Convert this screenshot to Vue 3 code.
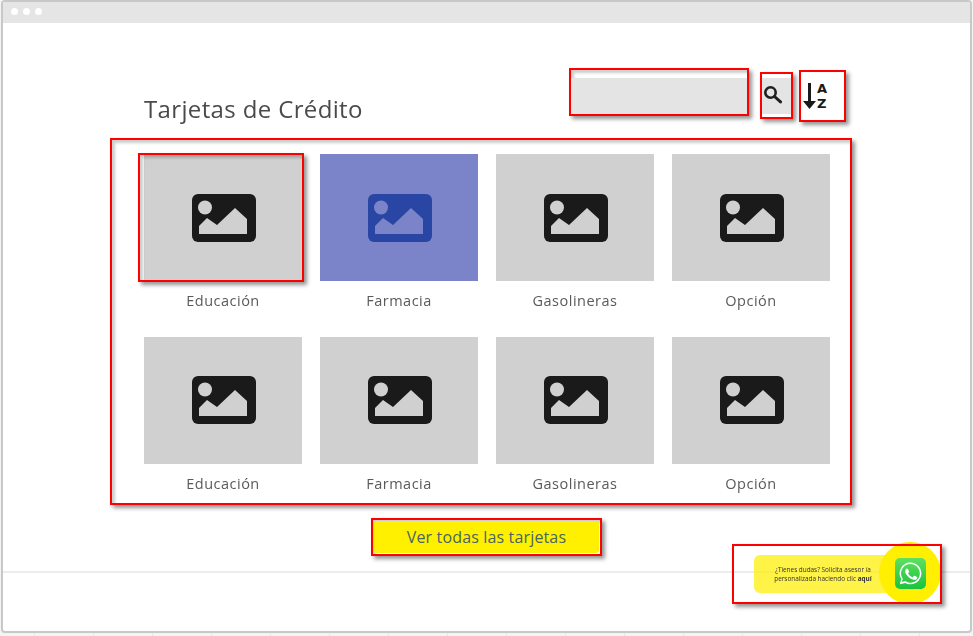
<script setup>
const tiles = [
  { label: 'Educación', mark: true },
  { label: 'Farmacia', active: true },
  { label: 'Gasolineras' },
  { label: 'Opción' },
  { label: 'Educación' },
  { label: 'Farmacia' },
  { label: 'Gasolineras' },
  { label: 'Opción' }
]
</script>

<template>
  <div class="page">
    <div class="window">
      <div class="titlebar"><i></i><i></i><i></i></div>
      <div class="toolbar">
        <h1 class="title">Tarjetas de Crédito</h1>
        <div class="marked search-box"><div class="search-field"></div></div>
        <div class="marked search-btn">
          <div class="search-fill">
            <svg width="20" height="19" viewBox="0 0 20 19" fill="none" stroke="#1f1f1f">
              <circle cx="7.500" cy="7.500" r="5.200" stroke-width="2.600" />
              <path d="M11.500 11.500l6 5.400" stroke-width="3" stroke-linecap="round" />
            </svg>
          </div>
        </div>
        <div class="marked sort-btn">
          <svg class="arrow" width="13" height="27" viewBox="0 0 13 27">
            <path d="M5 0h3v18h5l-6.500 8L0 18h5z" fill="#1a1a1a" />
          </svg>
          <div class="az"><span>A</span><span>Z</span></div>
        </div>
      </div>

      <div class="marked board">
        <div class="grid">
          <div v-for="(t, i) in tiles" :key="i" class="tile">
            <div class="thumb" :class="{ active: t.active }">
              <svg class="pic" width="64" height="48" viewBox="0 0 64 48">
                <rect class="pic-body" width="64" height="48" rx="6" />
                <circle class="pic-hole" cx="13" cy="13.500" r="7" />
                <path class="pic-hole" d="M7 40h48V25L43 14 25 31l-10-7-8 8z" />
              </svg>
              <div v-if="t.mark" class="marked tile-mark"></div>
            </div>
            <div class="label">{{ t.label }}</div>
          </div>
        </div>
      </div>

      <div class="marked cta"><button class="cta-btn">Ver todas las tarjetas</button></div>

      <div class="footer"></div>

      <div class="wa">
        <div class="wa-pill">
          <p>¿Tienes dudas? Solicita asesor ía<br />personalizada haciendo clic <b>aquí</b></p>
        </div>
        <div class="wa-circle">
          <div class="wa-square">
            <svg width="25" height="25" viewBox="0 0 24 24">
              <path fill="#fff" d="M12 1.500A10.400 10.400 0 0 0 3.100 17.300L1.700 22.400l5.300-1.400A10.400 10.400 0 1 0 12 1.500zm0 1.500a8.900 8.900 0 1 1-4.600 16.500l-.4-.2-3.300.9.900-3.200-.3-.4A8.900 8.900 0 0 1 12 3z" />
              <path fill="#fff" d="M8.700 7.200c-.2 0-.5 0-.8.400-.3.300-1 1-1 2.400s1 2.800 1.200 3c.1.200 2 3.100 4.900 4.300 2.400 1 2.900.8 3.400.7.500 0 1.700-.7 1.900-1.300.2-.7.200-1.200.2-1.300-.1-.1-.3-.2-.6-.4l-2-.9c-.3-.1-.5-.1-.7.200l-.9 1.100c-.2.200-.3.200-.6.100-.3-.2-1.200-.5-2.300-1.400-.9-.8-1.400-1.700-1.600-2-.2-.3 0-.5.100-.6l.4-.5.3-.5c.1-.2 0-.4 0-.5l-.9-2.100c-.2-.5-.5-.5-.7-.5z" />
            </svg>
          </div>
        </div>
        <div class="marked wa-mark"></div>
      </div>
    </div>
  </div>
</template>

<style>
html, body { margin: 0; background: #fff; }
</style>

<style scoped>
.page {
  width: 973px;
  height: 636px;
  overflow: hidden;
  box-sizing: border-box;
  padding: 0 1px 3px 1px;
  background: repeating-linear-gradient(90deg, #f4f4f4 0 58px, #e8e8e8 58px 59px);
  background-position-x: -24px;
  font-family: "Open Sans", sans-serif;
}
.window {
  position: relative;
  box-sizing: border-box;
  height: 633px;
  display: flex;
  flex-direction: column;
  background: #fff;
  border: 2px solid #c8c8c8;
  border-radius: 4px;
}
.titlebar {
  height: 21px;
  flex: none;
  display: flex;
  align-items: center;
  gap: 5px;
  padding: 0 0 2px 8px;
  box-sizing: border-box;
  background: #e5e5e5;
}
.titlebar i {
  width: 7px;
  height: 7px;
  border-radius: 50%;
  background: #fff;
}
.marked {
  box-sizing: border-box;
  border: 2px solid #ff0000;
  box-shadow: 3px 3px 4px rgba(0, 0, 0, 0.42), inset 3px 3px 3px rgba(0, 0, 0, 0.2);
}
.toolbar {
  flex: none;
  height: 70px;
  margin-top: 45px;
  display: flex;
  align-items: flex-start;
  padding-left: 141px;
}
.title {
  width: 425px;
  margin: 24px 0 0;
  font-size: 24px;
  line-height: 33px;
  font-weight: 400;
  color: #4a4a4a;
  letter-spacing: 0.36px;
  filter: blur(0.3px);
}
.search-box {
  width: 180px;
  height: 48px;
  padding-top: 8px;
}
.search-field {
  height: 36px;
  background: #e4e4e4;
}
.search-btn {
  width: 33px;
  height: 47px;
  margin: 4px 0 0 11px;
  padding-top: 4px;
  box-shadow: 3px 3px 4px rgba(0, 0, 0, 0.42);
}
.search-fill {
  height: 36px;
  background: #e4e4e4;
  display: flex;
  padding: 7px 0 0 1px;
  box-sizing: border-box;
}
.sort-btn {
  width: 47px;
  height: 52px;
  margin: 2px 0 0 6px;
  padding: 11px 0 0 2px;
  display: flex;
  align-items: flex-start;
  gap: 1px;
  box-shadow: 3px 3px 4px rgba(0, 0, 0, 0.42);
}
.az {
  display: flex;
  flex-direction: column;
  gap: 3px;
  font-family: "DejaVu Sans", sans-serif;
  font-weight: 700;
  font-size: 13px;
  line-height: 12px;
  color: #1a1a1a;
}
.board {
  flex: none;
  width: 742px;
  height: 367px;
  margin-left: 107px;
  padding: 14px 0 0 32px;
}
.grid {
  display: grid;
  grid-template-columns: repeat(4, 158px);
  column-gap: 18px;
  row-gap: 0;
}
.tile {
  height: 182.500px;
}
.thumb {
  position: relative;
  height: 127px;
  display: flex;
  align-items: center;
  justify-content: center;
  padding-left: 1px;
  box-sizing: border-box;
  background: #d0d0d0;
}
.thumb.active {
  background: #7b84c8;
}
.pic {
  filter: blur(0.3px);
}
.pic-body { fill: #1a1a1a; }
.pic-hole { fill: #d0d0d0; }
.active .pic-body { fill: #2a46a4; }
.active .pic-hole { fill: #7b84c8; }
.tile-mark {
  position: absolute;
  left: -6px;
  top: -1px;
  width: 166px;
  height: 129px;
}
.label {
  margin-top: 10px;
  text-align: center;
  font-size: 14.500px;
  line-height: 20px;
  color: #5a5a5a;
  letter-spacing: 0.5px;
  filter: blur(0.3px);
}
.cta {
  flex: none;
  width: 231px;
  height: 38px;
  margin: 13px 0 0 368px;
  padding: 1px;
}
.cta-btn {
  display: block;
  width: 100%;
  height: 100%;
  border: 0;
  border-radius: 3px;
  background: #fff000;
  color: #4a6464;
  font: 400 16px/32px "Open Sans", sans-serif;
  letter-spacing: 0.15px;
  padding: 0;
}
.footer {
  flex: 1;
  margin-top: 15px;
  border-top: 2px solid #ececec;
}
.wa {
  position: absolute;
  left: 729px;
  top: 542px;
  width: 210px;
  height: 60px;
}
.wa-pill {
  position: absolute;
  left: 22px;
  top: 11px;
  width: 150px;
  height: 38px;
  border-radius: 6px;
  background: rgba(255, 238, 0, 0.72);
  display: flex;
  align-items: center;
}
.wa-pill p {
  width: 138px;
  margin: 0;
  text-align: center;
  font-size: 6.400px;
  line-height: 9px;
  color: #333;
  white-space: nowrap;
  filter: blur(0.5px);
}
.wa-circle {
  position: absolute;
  left: 147px;
  top: -2px;
  width: 62px;
  height: 62px;
  border-radius: 50%;
  background: #ffef00;
  display: flex;
  align-items: center;
  justify-content: center;
}
.wa-square {
  width: 31px;
  height: 31px;
  border-radius: 5px;
  background: linear-gradient(180deg, #5fe060, #1bc23c);
  display: flex;
  align-items: center;
  justify-content: center;
}
.wa-mark {
  position: absolute;
  inset: 0;
  box-shadow: 3px 3px 4px rgba(0, 0, 0, 0.42);
}
</style>
